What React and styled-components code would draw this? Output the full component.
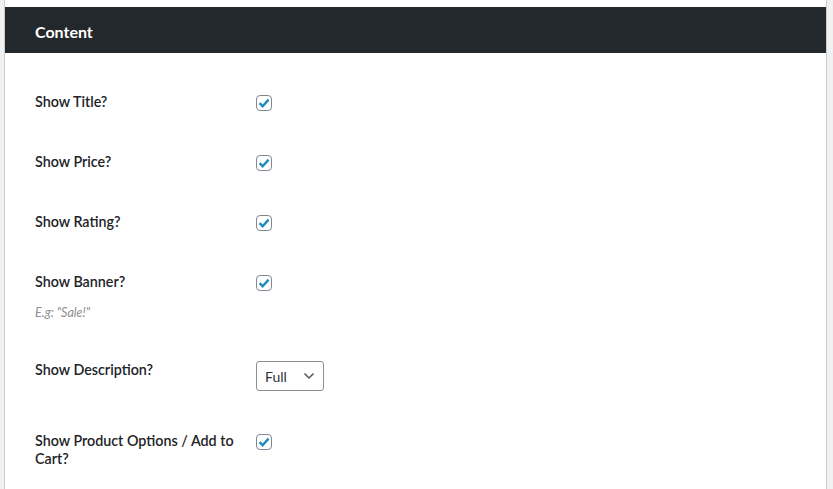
import styled, { createGlobalStyle } from "styled-components";

const GlobalStyle = createGlobalStyle`
  html, body {
    margin: 0;
    background: #f1f1f1;
    font-family: Lato, "Noto Sans", sans-serif;
    color: #1d2327;
  }
`;

const Panel = styled.section`
  box-sizing: border-box;
  width: 823px;
  margin-left: 4px;
  min-height: 489px;
  padding-top: 7px;
  background: #fff;
  border-left: 1px solid #c9cdd1;
  border-right: 1px solid #c9cdd1;
`;

const Header = styled.h2`
  margin: 0;
  height: 46px;
  display: flex;
  align-items: center;
  padding: 2px 0 0 30px;
  box-sizing: border-box;
  background: #23282d;
  color: #fff;
  font-size: 16px;
  font-weight: 700;
`;

const Table = styled.div`
  padding: 19px 30px 0;
`;

const Row = styled.div`
  display: grid;
  grid-template-columns: 221px 1fr;
  padding: 20px 0;
`;

const Label = styled.div`
  width: 205px;
  padding-top: 1px;
  font-size: 14.3px;
  font-weight: 600;
  line-height: 18px;
`;

const Hint = styled.div`
  margin-top: 15px;
  font-size: 12.5px;
  font-style: italic;
  line-height: 14px;
  color: #8c8f94;
`;

const Cell = styled.div`
  display: flex;
  align-items: ${(p) => (p.$top ? "flex-start" : "center")};
  height: ${(p) => (p.$top ? "auto" : "20px")};
`;

const Box = styled.span`
  box-sizing: border-box;
  width: 16px;
  height: 16px;
  margin-top: 1px;
  border: 1px solid #7e8993;
  border-radius: 4px;
  display: flex;
  align-items: center;
  justify-content: center;
`;

const Select = styled.div`
  box-sizing: border-box;
  margin-top: 1px;
  width: 68px;
  height: 30px;
  border: 1px solid #8c8f94;
  border-radius: 3px;
  display: flex;
  align-items: center;
  justify-content: space-between;
  padding: 0 8px;
  font-size: 14px;
  color: #2c3338;
`;

const Check = () => (
  <Box>
    <svg width="14" height="14" viewBox="0 0 14 14">
      <path d="M2.6 7.2 L5.6 10.2 L11.6 3.6" fill="none" stroke="#1e8cbe" strokeWidth="2.4" />
    </svg>
  </Box>
);

const rows = [
  { label: "Show Title?" },
  { label: "Show Price?" },
  { label: "Show Rating?" },
  { label: "Show Banner?", hint: 'E.g: "Sale!"' },
  { label: "Show Description?", select: "Full" },
  { label: "Show Product Options / Add to Cart?" },
];

export default function App() {
  return (
    <>
      <GlobalStyle />
      <Panel>
        <Header>Content</Header>
        <Table>
          {rows.map((r) => (
            <Row key={r.label}>
              <div>
                <Label>{r.label}</Label>
                {r.hint && <Hint>{r.hint}</Hint>}
              </div>
              {r.select ? (
                <Cell $top>
                  <Select>
                    {r.select}
                    <svg width="12" height="8" viewBox="0 0 12 8">
                      <path d="M1.5 1.5 L6 6 L10.5 1.5" fill="none" stroke="#50575e" strokeWidth="1.5" />
                    </svg>
                  </Select>
                </Cell>
              ) : (
                <Cell>
                  <Check />
                </Cell>
              )}
            </Row>
          ))}
        </Table>
      </Panel>
    </>
  );
}
